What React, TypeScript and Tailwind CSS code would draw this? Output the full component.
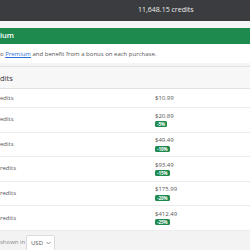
import React from "react";

interface Pack {
  credits: string;
  price: string;
  discount?: string;
}

// Solo se ve el final de cada etiqueta: la pagina esta recortada a la izquierda
const packs: Pack[] = [
  { credits: "edits", price: "$10.99" },
  { credits: "edits", price: "$20.89", discount: "-5%" },
  { credits: "edits", price: "$49.49", discount: "-10%" },
  { credits: "redits", price: "$93.49", discount: "-15%" },
  { credits: "redits", price: "$175.99", discount: "-20%" },
  { credits: "redits", price: "$412.49", discount: "-25%" },
];

const App: React.FC = () => {
  return (
    <div
      className="w-[250px] h-[250px] overflow-hidden bg-[#f4f5f6] text-[#555]"
      style={{ fontFamily: '"Open Sans", "Liberation Sans", sans-serif' }}
    >
      {/* Barra superior */}
      <div className="h-[21px] bg-[#3a3c3f] flex items-center pl-[138px] text-[7px] text-[#eee]">
        11,648.15 credits
      </div>

      {/* Premium */}
      <div className="mt-[7px] bg-white">
        <div className="h-[16px] bg-[#1e8a4e] flex items-center">
          <span className="text-[7.5px] font-semibold text-white whitespace-nowrap">ium</span>
        </div>
        <div className="h-[19px] flex items-center pt-[1px]">
          <p className="text-[6px] text-[#555] whitespace-nowrap">
            o{" "}
            <a href="#" className="text-[#2a6fd6] underline">
              Premium
            </a>{" "}
            and benefit from a bonus on each purchase.
          </p>
        </div>
      </div>

      {/* Tabla de creditos */}
      <div className="mt-[3px] bg-white border-t border-[#e2e2e2]">
        <div className="h-[22px] bg-[#f7f7f7] border-b border-[#e2e2e2] flex items-center pt-[2px]">
          <span className="text-[7.5px] text-[#333] whitespace-nowrap">dits</span>
        </div>
        {packs.map((p, i) => (
          <div
            key={p.price}
            className={`flex items-center border-b border-[#ececec] ${i === 0 ? "h-[19px]" : "h-[24.6px]"}`}
          >
            <div className="w-[155px] shrink-0 text-[6px] whitespace-nowrap">{p.credits}</div>
            <div className="flex flex-col items-start gap-[1.5px]">
              <span className="text-[6px] leading-[7px]">{p.price}</span>
              {p.discount && (
                <span className="h-[6px] px-[2px] rounded-[1.5px] bg-[#1e8a4e] text-white text-[4.5px] font-bold leading-[6px]">
                  {p.discount}
                </span>
              )}
            </div>
          </div>
        ))}

        {/* Pie: moneda */}
        <div className="h-[21px] bg-[#f3f3f3] flex items-start pt-[4px]">
          <span className="w-[24px] shrink-0 mt-[3px] text-[6px] text-[#888] whitespace-nowrap">shown in</span>
          <div className="ml-[2px] h-[17px] w-[29px] bg-white border border-[#dcdcdc] rounded-[2px] flex items-center gap-[3px] pl-[4px] text-[6px] text-[#555]">
            USD
            <svg width="5" height="4" viewBox="0 0 10 6" fill="none" stroke="#777" strokeWidth="1.6">
              <path d="M1 1l4 4 4-4" />
            </svg>
          </div>
        </div>
      </div>
    </div>
  );
};

export default App;
